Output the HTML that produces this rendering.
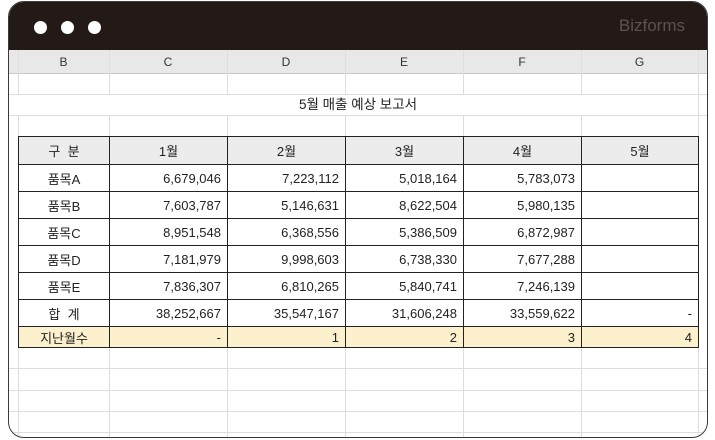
<!DOCTYPE html>
<html><head><meta charset="utf-8"><style>
*{margin:0;padding:0;box-sizing:border-box}
body{width:715px;height:440px;background:#fff;position:relative;overflow:hidden;font-family:"Liberation Sans","Noto Sans CJK KR",sans-serif;font-size:13px;color:#222}
.frame{position:absolute;left:8px;top:1px;width:700px;height:437px;border:1.5px solid #3a3a3a;border-radius:16px;overflow:hidden;background:#fff}
.top{position:absolute;left:0;top:0;right:0;height:48px;background:#231916}
.dot{position:absolute;top:19px;width:13px;height:13px;border-radius:50%;background:#fff}
.logo{position:absolute;right:22px;top:14px;color:#5a5350;font-size:17px}
.hdr{position:absolute;left:0;right:0;top:48px;height:24px;background:#e8e8e8;border-bottom:1px solid #c8c8c8}
.hl{position:absolute;top:48px;height:24px;text-align:center;line-height:24px;font-size:12px;color:#333}
.v{position:absolute;width:1px;background:#ddd;top:48px;bottom:0}
.h{position:absolute;height:1px;background:#ddd;left:0;right:0}
table{position:absolute;left:9px;top:134px;border-collapse:collapse;table-layout:fixed;background:#fff}
td{border:1px solid #222;padding:0 6px;text-align:right;font-size:13px;white-space:nowrap}
td:first-child{text-align:center}
tr.head td{background:#ececec;text-align:center}
tr.y td{background:#fdf0cc}
</style></head><body>
<div class="frame">
<div class="top"><div class="dot" style="left:25px"></div><div class="dot" style="left:52px"></div><div class="dot" style="left:79px"></div><div class="logo">Bizforms</div></div>
<div class="hdr"></div>
<div class="v" style="left:9px"></div><div class="v" style="left:100px"></div><div class="v" style="left:218px"></div><div class="v" style="left:336px"></div><div class="v" style="left:454px"></div><div class="v" style="left:572px"></div><div class="v" style="left:689px"></div>
<div class="hl" style="left:9px;width:91px">B</div><div class="hl" style="left:100px;width:118px">C</div><div class="hl" style="left:218px;width:118px">D</div><div class="hl" style="left:336px;width:118px">E</div><div class="hl" style="left:454px;width:118px">F</div><div class="hl" style="left:572px;width:117px">G</div>
<div class="h" style="top:92px"></div><div class="h" style="top:113px"></div><div class="h" style="top:366px"></div><div class="h" style="top:388px"></div><div class="h" style="top:409px"></div><div class="h" style="top:430px"></div>
<div style="position:absolute;left:9px;width:680px;top:93px;height:20px;background:#fff;text-align:center;line-height:20px;font-size:13.5px">5월 매출 예상 보고서</div>
<table>
<colgroup><col style="width:91px"><col style="width:118px"><col style="width:118px"><col style="width:118px"><col style="width:118px"><col style="width:117px"></colgroup>
<tr class="head" style="height:28px"><td>구 &nbsp;분</td><td>1월</td><td>2월</td><td>3월</td><td>4월</td><td>5월</td></tr>
<tr style="height:27px"><td>품목A</td><td>6,679,046</td><td>7,223,112</td><td>5,018,164</td><td>5,783,073</td><td></td></tr>
<tr style="height:27px"><td>품목B</td><td>7,603,787</td><td>5,146,631</td><td>8,622,504</td><td>5,980,135</td><td></td></tr>
<tr style="height:27px"><td>품목C</td><td>8,951,548</td><td>6,368,556</td><td>5,386,509</td><td>6,872,987</td><td></td></tr>
<tr style="height:27px"><td>품목D</td><td>7,181,979</td><td>9,998,603</td><td>6,738,330</td><td>7,677,288</td><td></td></tr>
<tr style="height:27px"><td>품목E</td><td>7,836,307</td><td>6,810,265</td><td>5,840,741</td><td>7,246,139</td><td></td></tr>
<tr style="height:27px"><td>합 &nbsp;계</td><td>38,252,667</td><td>35,547,167</td><td>31,606,248</td><td>33,559,622</td><td>-</td></tr>
<tr class="y" style="height:21px"><td>지난월수</td><td>-</td><td>1</td><td>2</td><td>3</td><td>4</td></tr>
</table>
</div>
</body></html>
